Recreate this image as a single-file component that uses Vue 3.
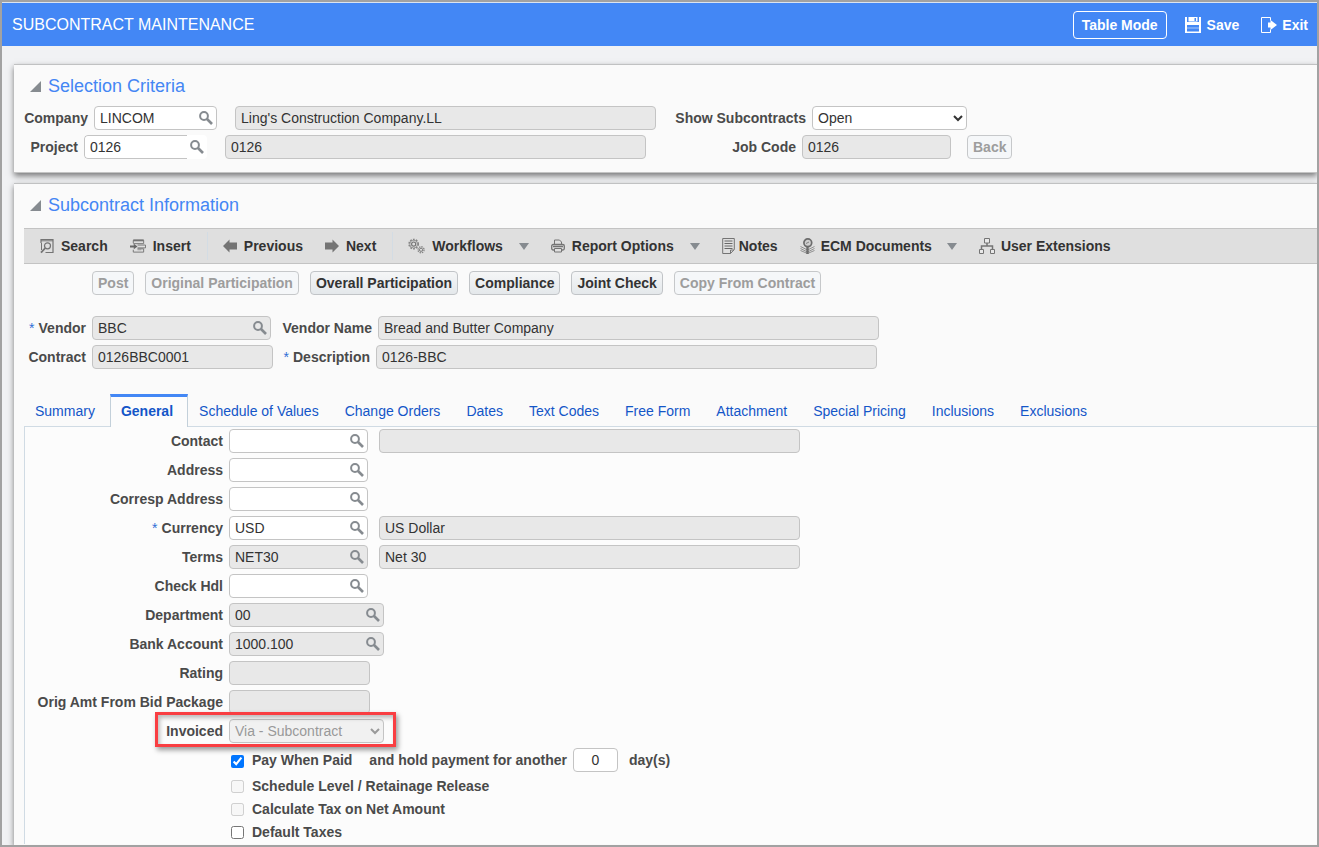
<script setup>
import { reactive, ref } from 'vue'

const tools = [
  { label: 'Search', icon: 'search', w: 14, cls: 'gap-7' },
  { label: 'Insert', icon: 'insert', w: 16, cls: 'gap-7' },
  { label: 'Previous', icon: 'prev', w: 14, cls: 'gap-7 split' },
  { label: 'Next', icon: 'next', w: 14, cls: 'gap-7' },
  { label: 'Workflows', icon: 'gears', w: 17, cls: 'gap-7 split', menu: true },
  { label: 'Report Options', icon: 'print', w: 14, cls: 'gap-7', menu: true },
  { label: 'Notes', icon: 'notes', w: 13, cls: 'gap-4' },
  { label: 'ECM Documents', icon: 'ecm', w: 15, cls: 'gap-6', menu: true },
  { label: 'User Extensions', icon: 'tree', w: 16, cls: 'gap-6' },
]

const actions = [
  { label: 'Post', off: true },
  { label: 'Original Participation', off: true },
  { label: 'Overall Participation', off: false },
  { label: 'Compliance', off: false },
  { label: 'Joint Check', off: false },
  { label: 'Copy From Contract', off: true },
]

const tabs = ['Summary', 'General', 'Schedule of Values', 'Change Orders', 'Dates', 'Text Codes',
  'Free Form', 'Attachment', 'Special Pricing', 'Inclusions', 'Exclusions']
const activeTab = ref('General')

const fields = reactive([
  { id: 'contact', label: 'Contact', value: '', size: 'w139', lookup: true, desc: '', hasDesc: true },
  { id: 'address', label: 'Address', value: '', size: 'w139', lookup: true },
  { id: 'corresp', label: 'Corresp Address', value: '', size: 'w139', lookup: true },
  { id: 'currency', label: 'Currency', value: 'USD', size: 'w139', lookup: true, required: true, desc: 'US Dollar', hasDesc: true },
  { id: 'terms', label: 'Terms', value: 'NET30', size: 'w139', lookup: true, locked: true, desc: 'Net 30', hasDesc: true },
  { id: 'check', label: 'Check Hdl', value: '', size: 'w139', lookup: true },
  { id: 'department', label: 'Department', value: '00', size: 'w155', lookup: true, locked: true },
  { id: 'bank', label: 'Bank Account', value: '1000.100', size: 'w155', lookup: true, locked: true },
  { id: 'rating', label: 'Rating', value: '', size: 'w141', locked: true },
  { id: 'origamt', label: 'Orig Amt From Bid Package', value: '', size: 'w141', locked: true },
])

const form = reactive({ company: 'LINCOM', project: '0126', show: 'Open', invoiced: 'Via - Subcontract', payWhenPaid: true, days: '0', defaultTaxes: false })
</script>

<template>
  <div class="window">
    <svg class="sprite" aria-hidden="true">
      <symbol id="i-lens" viewBox="0 0 14 14">
        <circle cx="5" cy="5" r="3.9" fill="none" stroke="currentColor" stroke-width="2" />
        <path d="M8 8l5 5" stroke="currentColor" stroke-width="2.6" />
      </symbol>
      <symbol id="i-save" viewBox="0 0 16 16">
        <path d="M0 0h2v16H0zM14 0h2v16h-2zM0 14.500h16V16H0zM0 5h16v2H0z" fill="#fff" />
        <path d="M3.500 0h9v4.500h-9z" fill="#fff" />
        <path d="M9.500 1h1.500v3H9.500z" fill="#4387f5" />
        <path d="M2 7h12v1H2z" fill="#fff" />
        <path d="M2 10.500h12v1H2z" fill="#a9c8fb" />
      </symbol>
      <symbol id="i-exit" viewBox="0 0 16 16">
        <path d="M9.500 3.500V.5H.5v15h9v-3" fill="none" stroke="#fff" />
        <path d="M7 5.500h2.500V3L16 8l-6.500 5v-2.500H7z" fill="#fff" />
      </symbol>
      <symbol id="i-search" viewBox="0 0 14 16">
        <path d="M1 5V1.500h12v13H5.500" fill="none" stroke="#747474" stroke-width="1.200" />
        <path d="M1 2.800h12" stroke="#747474" />
        <path d="M1.500 5v7" stroke="#747474" />
        <circle cx="7.500" cy="7.800" r="3" fill="none" stroke="#747474" stroke-width="1.200" />
        <path d="M5.300 10L1 14.700" stroke="#747474" stroke-width="1.800" />
      </symbol>
      <symbol id="i-insert" viewBox="0 0 17 16">
        <path d="M3.500 5V2h11v3.500h-11" fill="none" stroke="#747474" />
        <path d="M3.500 2h11" stroke="#747474" stroke-width="2" />
        <path d="M0 7.500h4V5.500L8 8.500 4 11.500V9.500H0z" fill="#686868" />
        <path d="M8 7h8.500v3H8M3.500 12v2.500h11V11h-6.500" fill="none" stroke="#747474" />
        <path d="M8 12h4" stroke="#999" />
      </symbol>
      <symbol id="i-prev" viewBox="0 0 14 14">
        <path d="M0 7l6.500-6.500V3.500H14v7H6.500v3z" fill="#747474" />
      </symbol>
      <symbol id="i-next" viewBox="0 0 14 14">
        <path d="M14 7L7.500 .5V3.500H0v7h7.500v3z" fill="#747474" />
      </symbol>
      <symbol id="i-gears" viewBox="0 0 18 16">
        <circle cx="6" cy="6" r="4.900" fill="none" stroke="#858585" stroke-width="1.600" stroke-dasharray="1.900 1.200" />
        <circle cx="6" cy="6" r="4.100" fill="none" stroke="#858585" stroke-width=".8" />
        <circle cx="6" cy="6" r="2.200" fill="none" stroke="#747474" stroke-width="1.200" />
        <circle cx="13.800" cy="12" r="3.200" fill="none" stroke="#858585" stroke-width="1.400" stroke-dasharray="1.500 1" />
        <circle cx="13.800" cy="12" r="1.700" fill="none" stroke="#747474" />
      </symbol>
      <symbol id="i-print" viewBox="0 0 14 16">
        <path d="M3.500 6V2h5l2 2v2" fill="none" stroke="#747474" />
        <rect x=".7" y="6.500" width="12.600" height="5.500" rx="1.500" fill="none" stroke="#747474" stroke-width="1.300" />
        <path d="M2 8.500h10" stroke="#747474" stroke-width="1.500" />
        <path d="M3.500 10.500h7v3.500h-7z" fill="#e0e0e0" stroke="#747474" />
      </symbol>
      <symbol id="i-notes" viewBox="0 0 13 16">
        <path d="M.7.500h11.600v11L8.500 15.500H.7z" fill="none" stroke="#747474" />
        <path d="M2.500 3h8M2.500 5.500h8M2.500 8h8M2.500 10.500h8" stroke="#686868" />
        <path d="M8.500 15.500v-3.500h3.500" fill="none" stroke="#747474" />
      </symbol>
      <symbol id="i-ecm" viewBox="0 0 15 16">
        <path d="M.5 8.500l7 3.500 7-3.500M.5 10.500l7 3.500 7-3.500M.5 12.500l7 3 7-3" fill="none" stroke="#909090" />
        <circle cx="7.800" cy="4.800" r="3.900" fill="#d0d0d0" stroke="#6c6c6c" stroke-width="1.700" />
        <path d="M7.500 9v7" stroke="#6c6c6c" stroke-width="2.400" />
        <path d="M6 5.500l3-1.500" stroke="#858585" />
      </symbol>
      <symbol id="i-tree" viewBox="0 0 16 16">
        <path d="M8 5v3M2.500 11V8h11v3" fill="none" stroke="#747474" stroke-width="1.500" />
        <path d="M5.500.500h5v4.500h-5zM.5 11.500h4v4h-4zM11.500 11.500h4v4h-4z" fill="#e8e8e8" stroke="#747474" />
      </symbol>
    </svg>

    <header class="topbar">
      <h1>SUBCONTRACT MAINTENANCE</h1>
      <button type="button" class="mode">Table Mode</button>
      <button type="button" class="top-action save"><svg width="16" height="16"><use href="#i-save" /></svg>Save</button>
      <button type="button" class="top-action exit"><svg width="16" height="16"><use href="#i-exit" /></svg>Exit</button>
    </header>

    <main>
      <section class="panel criteria">
        <h2><svg width="12" height="12" viewBox="0 0 12 12"><path d="M11 1v11H0z" fill="#868b90" /></svg>Selection Criteria</h2>
        <div class="rows">
          <div class="row">
            <label class="l64" for="company">Company</label>
            <span class="lookup w123"><input id="company" v-model="form.company"><button type="button" aria-label="Find company"><svg width="14" height="14"><use href="#i-lens" /></svg></button></span>
            <input class="box locked w421 far" aria-label="Company name" value="Ling's Construction Company.LL" readonly>
            <label class="l150" for="show">Show Subcontracts</label>
            <select id="show" v-model="form.show" class="box w155"><option>Open</option><option>All</option></select>
          </div>
          <div class="row">
            <label class="l54" for="project">Project</label>
            <span class="lookup unframed w123"><input id="project" v-model="form.project"><button type="button" aria-label="Find project"><svg width="14" height="14"><use href="#i-lens" /></svg></button></span>
            <input class="box locked w421 far" aria-label="Project name" value="0126" readonly>
            <label class="l150" for="job">Job Code</label>
            <input id="job" class="box locked w149" value="0126" readonly>
            <button type="button" class="btn back" disabled>Back</button>
          </div>
        </div>
      </section>

      <section class="panel info">
        <h2><svg width="12" height="12" viewBox="0 0 12 12"><path d="M11 1v11H0z" fill="#868b90" /></svg>Subcontract Information</h2>
        <div class="toolbar">
          <button v-for="t in tools" :key="t.label" type="button" class="tool" :class="t.cls">
            <svg :width="t.w" height="16"><use :href="'#i-' + t.icon" /></svg>
            <span>{{ t.label }}</span>
            <i v-if="t.menu" class="caret"></i>
          </button>
        </div>
        <div class="actions">
          <button v-for="a in actions" :key="a.label" type="button" class="btn" :disabled="a.off">{{ a.label }}</button>
        </div>
        <div class="rows keys">
          <div class="row">
            <label class="l62" for="vendor"><b class="req">*</b>Vendor</label>
            <span class="lookup locked w179"><input id="vendor" value="BBC" readonly><button type="button" aria-label="Find vendor"><svg width="14" height="14"><use href="#i-lens" /></svg></button></span>
            <label class="l101" for="vname">Vendor Name</label>
            <input id="vname" class="box locked w501" value="Bread and Butter Company" readonly>
          </div>
          <div class="row">
            <label class="l62" for="contract">Contract</label>
            <input id="contract" class="box locked w181" value="0126BBC0001" readonly>
            <label class="l97" for="description"><b class="req">*</b>Description</label>
            <input id="description" class="box locked w501" value="0126-BBC" readonly>
          </div>
        </div>

        <nav class="tabs">
          <a v-for="t in tabs" :key="t" href="#" :class="{ active: t === activeTab }" @click.prevent="activeTab = t">{{ t }}</a>
        </nav>
        <div class="sheet">
          <div class="rows">
            <div v-for="f in fields" :key="f.id" class="row">
              <label class="l198" :for="f.id"><b v-if="f.required" class="req">*</b>{{ f.label }}</label>
              <span v-if="f.lookup" class="lookup" :class="[f.size, { locked: f.locked }]"><input :id="f.id" v-model="f.value" :readonly="f.locked"><button type="button" :aria-label="'Find ' + f.label"><svg width="14" height="14"><use href="#i-lens" /></svg></button></span>
              <input v-else :id="f.id" class="box locked" :class="f.size" :value="f.value" readonly>
              <input v-if="f.hasDesc" class="box locked w421 near" :aria-label="f.label + ' description'" :value="f.desc" readonly>
            </div>
            <div class="row">
              <label class="l198" for="invoiced">Invoiced</label>
              <span class="select-wrap"><select id="invoiced" v-model="form.invoiced" class="box w155" disabled><option>Via - Subcontract</option></select><span class="highlight"></span></span>
            </div>
            <div class="row checks">
              <label class="check"><input v-model="form.payWhenPaid" type="checkbox">Pay When Paid</label>
              <label for="days">and hold payment for another</label>
              <input id="days" v-model="form.days" class="box days">
              <span class="unit">day(s)</span>
            </div>
          </div>
          <div class="options">
            <label class="check"><input type="checkbox" disabled>Schedule Level / Retainage Release</label>
            <label class="check"><input type="checkbox" disabled>Calculate Tax on Net Amount</label>
            <label class="check"><input v-model="form.defaultTaxes" type="checkbox">Default Taxes</label>
          </div>
        </div>
      </section>
    </main>
  </div>
</template>

<style>
body { margin: 0; }
</style>

<style scoped>
.window {
  box-sizing: border-box;
  min-height: 100vh;
  border: 2px solid #a2a2a2;
  background: #f1f2f4;
  display: flex;
  flex-direction: column;
  overflow: hidden;
  font: 14px/16px "Liberation Sans", Arial, sans-serif;
  color: #333;
}
.window *, .window *::before { box-sizing: border-box; }
.sprite { position: absolute; width: 0; height: 0; }
button, input, select { font: inherit; color: inherit; margin: 0; }
button { cursor: pointer; }
svg { display: block; flex: none; }

.topbar {
  display: flex;
  align-items: center;
  height: 44px;
  padding: 0 9px 0 10px;
  border-top: 1px solid #dbe4f0;
  background: #4387f5;
  color: #fff;
}
h1 { flex: 1; margin: 0; font-size: 16px; line-height: 20px; font-weight: 400; }
.topbar button { background: none; border: 0; font-weight: 700; padding: 0; }
.topbar .mode { height: 28px; padding: 0 8px; border: 1px solid #fff; border-radius: 4px; }
.topbar .top-action { display: flex; align-items: center; }
.topbar .save { margin-left: 18px; gap: 6px; }
.topbar .exit { margin-left: 22px; gap: 5px; }

main { flex: 1; display: flex; flex-direction: column; padding: 18px 0 0 12px; }
.panel { background: #fafafa; border-top: 1px solid #c0c1c2; box-shadow: 0 3px 6px rgba(0, 0, 0, .5); }
.criteria { padding: 0 0 13px 10px; margin-bottom: 10px; border-bottom: 1px solid #c4c4c4; }
.info { flex: 1; padding-left: 10px; }
h2 { display: flex; align-items: center; gap: 6px; height: 41px; margin: 0; padding-left: 6px; font-size: 18px; line-height: 20px; font-weight: 400; color: #4486f4; }

.rows { display: flex; flex-direction: column; gap: 5px; }
.row { display: flex; align-items: center; height: 24px; }
.row > label { flex: none; text-align: right; margin-right: 6px; font-weight: 700; color: #4a4a4a; white-space: nowrap; }
.req { color: #2f6fd6; font-weight: 400; margin-right: 4px; }
.box, .lookup { flex: none; height: 24px; border: 1px solid #c4c4c4; border-radius: 4px; background: #fff; }
.box { padding: 0 5px; }
select.box { padding: 0 1px; }
select.box:disabled { background: #f1f1f1; color: #999; border-color: #c4c4c4; opacity: 1; }
.lookup { display: flex; align-items: center; overflow: hidden; }
.lookup input { flex: 1; min-width: 0; height: 22px; padding: 0 5px; border: 0; background: none; }
.lookup button { display: flex; width: 20px; height: 22px; padding: 4px 0 0 3px; border: 0; background: none; color: #868b90; }
.box.locked, .lookup.locked { background: #e8e8e8; }
.lookup.unframed { border: 0; background: #fff; }
.unframed input { height: 24px; border: 1px solid #c4c4c4; border-right: 0; border-radius: 4px 0 0 4px; }
.far { margin-left: 18px; }
.near { margin-left: 11px; }
.l54 { width: 54px; }
.l62 { width: 62px; }
.l64 { width: 64px; }
.l97 { width: 97px; }
.l101 { width: 101px; }
.l150 { width: 150px; }
.l198 { width: 198px; }
.w123 { width: 123px; }
.w139 { width: 139px; }
.w141 { width: 141px; }
.w149 { width: 149px; }
.w155 { width: 155px; }
.w179 { width: 179px; }
.w181 { width: 181px; }
.w421 { width: 421px; }
.w501 { width: 501px; }

.btn { height: 24px; padding: 0 5px; border: 1px solid #c1c4c7; border-radius: 4px; background: linear-gradient(#f5f6f7, #e4e8eb); font-weight: 700; white-space: nowrap; }
.btn:disabled { background: #f5f7f9; color: #9d9d9d; border-color: #c6c8ca; }
.back { margin-left: 16px; }

.toolbar { display: flex; align-items: center; height: 36px; margin-top: 3px; padding-left: 16px; border: solid #c3c3c3; border-width: 1px 0; background: #dfdfdf; }
.tool { display: flex; align-items: center; height: 34px; padding: 0; margin-right: 22px; border: 0; background: none; font-weight: 700; white-space: nowrap; }
.gap-4 { gap: 4px; }
.gap-6 { gap: 6px; }
.gap-7 { gap: 7px; }
.split::before { content: ""; width: 1px; height: 28px; margin-left: -6px; margin-right: 8px; background: #d3dce4; }
.caret { width: 0; height: 0; margin-left: 9px; border: solid transparent; border-width: 7px 5px 0; border-top-color: #868b90; }

.actions { display: flex; gap: 11px; padding: 7px 0 0 68px; }
.keys { margin-top: 21px; }

.tabs { display: flex; gap: 4px; margin-top: 25px; }
.tabs a { height: 32px; padding: 4px 10px 0; border: 1px solid transparent; border-top: 3px solid transparent; border-bottom: 0; line-height: 20px; color: #1456c8; text-decoration: none; white-space: nowrap; }
.tabs .active { position: relative; height: 33px; margin: 0 -4px -1px 0; padding-right: 14px; border-color: #4387f5 #c3d0da #c3d0da; background: #fcfcfc; font-weight: 700; }
.sheet { padding: 2px 0 1px; border: solid #d0dbe4; border-width: 1px 0 0 1px; background: #fcfcfc; }

.select-wrap { position: relative; display: flex; }
.highlight { position: absolute; top: -7px; left: -74px; right: -12px; bottom: -4px; border: 3px solid #f93e42; box-shadow: 2px 3px 5px rgba(0, 0, 0, .4), inset 2px 3px 4px rgba(0, 0, 0, .25); pointer-events: none; }
.checks { padding-left: 206px; }
.row > .check { margin-right: 17px; }
.check { display: flex; align-items: center; gap: 8px; font-weight: 700; color: #4a4a4a; }
.check input { width: 13px; height: 13px; margin-top: 2px; }
.days { width: 45px; text-align: center; }
.unit { margin-left: 11px; font-weight: 700; color: #4a4a4a; }
.options { padding: 2px 0 0 206px; }
.options .check { width: max-content; height: 23px; }
</style>
